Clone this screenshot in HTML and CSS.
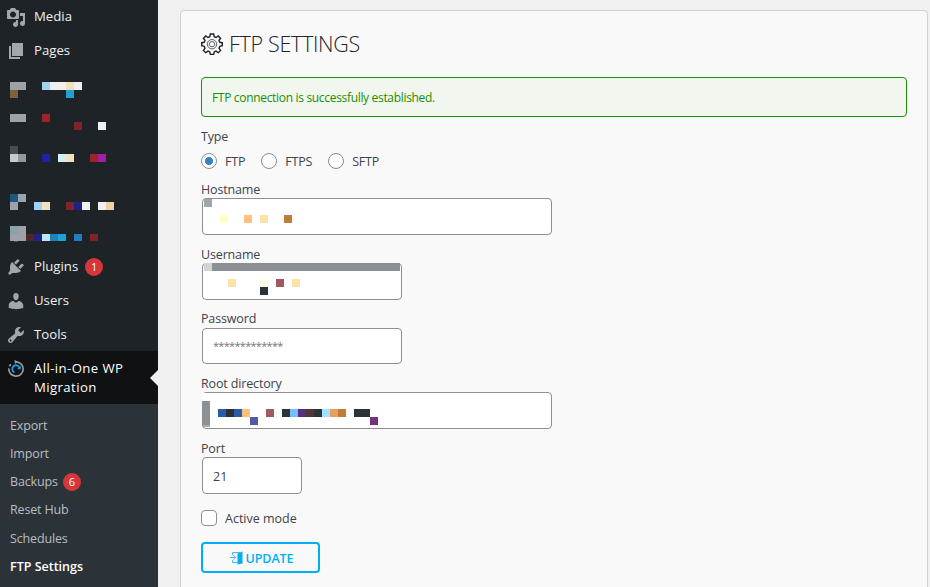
FILE: index.html
```html
<!DOCTYPE html>
<html lang="en">
<head>
  <meta charset="utf-8">
  <title>FTP Settings</title>
  <link rel="stylesheet" href="styles.css">
</head>
<body>
  <div class="admin">
    <nav class="sidebar">
      <ul class="menu">
        <li class="menu-item">
          <svg class="menu-icon" viewBox="0 0 20 20"><path fill-rule="evenodd" d="M13 11V4c0-.55-.45-1-1-1h-1.670L9 1H5L3.670 3H2c-.55 0-1 .45-1 1v7c0 .55.45 1 1 1h10c.55 0 1-.45 1-1zM7 4.500c1.660 0 3 1.340 3 3s-1.340 3-3 3-3-1.340-3-3 1.340-3 3-3zM14 6h5v10.500a2.500 2.500 0 1 1-2-2.450V9h-3zM10 13h2v4.500a2.500 2.500 0 1 1-2-2.450z"/></svg>
          <span class="menu-name">Media</span>
        </li>
        <li class="menu-item">
          <svg class="menu-icon" viewBox="0 0 20 20"><path d="M6 15V2h11v13zM5 16h9v2H3V5h2z"/></svg>
          <span class="menu-name">Pages</span>
        </li>
        <li class="menu-hidden">
          <svg class="mosaic" width="158" height="34" viewBox="0 67 158 34">
            <path fill="#9ca2a7" d="M10 82h16v8H10z"/>
            <path fill="#82613a" d="M10 90h8v8h-8z"/>
            <path fill="#9fd3f5" d="M42 82h8v8h-8z"/>
            <path fill="#f0f0f1" d="M50 82h32v8H50z"/>
            <path fill="#f2e2bc" d="M66 82h8v8h-8z"/>
            <path fill="#1ea2d4" d="M66 90h8v8h-8z"/>
          </svg>
        </li>
        <li class="menu-hidden">
          <svg class="mosaic" width="158" height="34" viewBox="0 101 158 34">
            <path fill="#9ca2a7" d="M10 114h16v8H10z"/>
            <path fill="#9f2428" d="M42 114h8v8h-8z"/>
            <path fill="#7d2329" d="M74 122h8v8h-8z"/>
            <path fill="#f0f0f1" d="M98 122h8v8h-8z"/>
          </svg>
        </li>
        <li class="menu-hidden">
          <svg class="mosaic" width="158" height="34" viewBox="0 135 158 34">
            <path fill="#484d50" d="M10 146h8v8h-8z"/>
            <path fill="#cacaca" d="M10 154h8v8h-8z"/>
            <path fill="#969898" d="M18 154h8v8h-8z"/>
            <path fill="#2022a5" d="M42 154h8v8h-8z"/>
            <path fill="#d0f0f1" d="M58 154h8v8h-8z"/>
            <path fill="#f2e2bc" d="M66 154h8v8h-8z"/>
            <path fill="#9f2428" d="M90 154h8v8h-8z"/>
            <path fill="#a020a5" d="M98 154h8v8h-8z"/>
          </svg>
        </li>
        <li class="menu-hidden after-separator">
          <svg class="mosaic" width="158" height="34" viewBox="0 181 158 34">
            <path fill="#1f577f" d="M10 194h8v8h-8z"/>
            <path fill="#9ca2a7" d="M18 194h8v8h-8zM10 202h8v8h-8z"/>
            <path fill="#9fd3f5" d="M34 202h8v8h-8z"/>
            <path fill="#f2e2bc" d="M42 202h8v8h-8z"/>
            <path fill="#7d2329" d="M66 202h8v8h-8z"/>
            <path fill="#1f2282" d="M74 202h8v8h-8z"/>
            <path fill="#f0f0f1" d="M82 202h8v8h-8zM98 202h8v8h-8z"/>
            <path fill="#f2d1a0" d="M106 202h8v8h-8z"/>
          </svg>
        </li>
        <li class="menu-hidden">
          <svg class="mosaic" width="158" height="34" viewBox="0 215 158 34">
            <path fill="#9ca2a7" d="M10 226h16v15H10z"/>
            <path fill="#8ba2a8" d="M10 226h8v8h-8z"/>
            <path fill="#4f2529" d="M26 234h8v7h-8z"/>
            <path fill="#1f2282" d="M34 234h8v7h-8z"/>
            <path fill="#bfe5f3" d="M42 234h8v7h-8z"/>
            <path fill="#1e7fc1" d="M50 234h8v7h-8zM74 234h8v7h-8z"/>
            <path fill="#1ea2d4" d="M58 234h8v7h-8z"/>
            <path fill="#7d2329" d="M90 234h8v7h-8z"/>
            <path fill="#484d50" d="M14 241h4v1h-4z"/>
          </svg>
        </li>
        <li class="menu-item">
          <svg class="menu-icon" viewBox="0 0 20 20"><path d="M13.110 4.360L9.870 7.600 8 5.730l3.240-3.240c.35-.34 1.050-.2 1.560.32.52.51.66 1.210.31 1.550zm-8 1.770l.91-1.120 9.010 9.010-1.190.84c-.71.71-2.630 1.160-3.820 1.160H6.140L4.900 17.260c-.59.59-1.540.59-2.120 0-.59-.58-.59-1.530 0-2.120l1.240-1.240v-3.880c0-1.130.4-3.190 1.090-3.890zm7.260 3.970l3.240-3.240c.34-.35 1.040-.21 1.550.31.52.51.66 1.210.31 1.550l-3.240 3.250z"/></svg>
          <span class="menu-name">Plugins</span>
          <span class="count">1</span>
        </li>
        <li class="menu-item">
          <svg class="menu-icon" viewBox="0 0 20 20"><path d="M10 9.250c-2.270 0-2.730-3.440-2.730-3.440C7 4.020 7.820 2 9.970 2c2.160 0 2.980 2.020 2.710 3.810 0 0-.41 3.440-2.680 3.440zm0 2.570L12.720 10c2.390 0 4.520 2.330 4.520 4.530v2.490s-3.650 1.130-7.240 1.130c-3.650 0-7.240-1.130-7.240-1.130v-2.490c0-2.250 1.940-4.480 4.470-4.480z"/></svg>
          <span class="menu-name">Users</span>
        </li>
        <li class="menu-item">
          <svg class="menu-icon" viewBox="0 0 20 20"><path d="M16.680 9.770c-1.340 1.340-3.300 1.670-4.950.99l-5.410 6.520c-.99.99-2.590.99-3.580 0s-.99-2.590 0-3.570l6.520-5.420c-.68-1.650-.35-3.610.99-4.950 1.280-1.280 3.120-1.620 4.720-1.060l-2.890 2.890 2.820 2.820 2.860-2.870c.53 1.580.18 3.390-1.080 4.650zM3.810 16.210c.4.390 1.040.39 1.430 0 .4-.4.4-1.040 0-1.430-.39-.4-1.030-.4-1.430 0-.39.39-.39 1.030 0 1.430z"/></svg>
          <span class="menu-name">Tools</span>
        </li>
        <li class="menu-item current">
          <svg class="menu-icon" viewBox="0 0 20 20">
            <path class="ring" d="M10 2.800a7.200 7.200 0 1 1-7.200 6.500M3.500 7.300a7.200 7.200 0 0 1 1.300-2"/>
            <path class="ring-tip" d="M8.500 .8l3 2L9 5z"/>
            <path class="swirl" d="M8.500 13.400a3.700 3.700 0 1 1 5-4.400"/>
            <path class="swirl-tip" d="M11 10.200h3.800V6.500z"/>
          </svg>
          <span class="menu-name wide-name">All-in-One WP<br>Migration</span>
        </li>
      </ul>
      <ul class="submenu">
        <li>Export</li>
        <li>Import</li>
        <li class="has-count">Backups <span class="count">6</span></li>
        <li>Reset Hub</li>
        <li>Schedules</li>
        <li class="active">FTP Settings</li>
      </ul>
    </nav>

    <main class="content">
      <section class="card">
        <h1>
          <svg class="gear" width="22" height="22" viewBox="0 0 22 22">
            <path d="M9.300 1h3.400l.5 2.700 1.800.8 2.300-1.600 2.300 2.300L18 7.400l.8 1.900 2.500.4v3.100l-2.500.5-.8 1.800 1.600 2.300-2.300 2.300-2.300-1.600-1.800.8-.5 2.500H9.300l-.5-2.500-1.800-.8-2.300 1.600-2.300-2.300L4 15.100l-.8-1.800-2.500-.5V9.700l2.500-.4L4 7.400 2.400 5.200l2.300-2.300L7 4.500l1.800-.8z"/>
            <circle class="thin" cx="11" cy="11.200" r="4.700"/>
            <circle class="thin" cx="11" cy="11.200" r="2.700"/>
          </svg>
          <span>FTP SETTINGS</span>
        </h1>
        <div class="message">FTP connection is successfully established.</div>

        <form>
          <div class="label type-label">Type</div>
          <div class="radios">
            <label><input type="radio" name="type" checked><span>FTP</span></label>
            <label><input type="radio" name="type"><span>FTPS</span></label>
            <label><input type="radio" name="type"><span>SFTP</span></label>
          </div>

          <div class="field">
            <div class="label">Hostname</div>
            <div class="input wide">
              <svg class="mosaic" width="350" height="37" viewBox="202 198 350 37">
                <path fill="#a2a5aa" d="M204 199h8v8h-8z"/>
                <path fill="#ffffc8" d="M220 215h8v8h-8z"/>
                <path fill="#ffc07d" d="M244 215h8v8h-8z"/>
                <path fill="#ffe1a6" d="M260 215h8v8h-8z"/>
                <path fill="#c17d37" d="M284 215h8v8h-8z"/>
              </svg>
            </div>
          </div>
          <div class="field">
            <div class="label">Username</div>
            <div class="input">
              <svg class="mosaic" width="200" height="37" viewBox="202 263 200 37">
                <path fill="#d1d3d5" d="M204 263h8v8h-8z"/>
                <path fill="#8c8f94" d="M212 263h188v8H212z"/>
                <path fill="#ffe1a6" d="M228 279h8v8h-8zM292 279h8v8h-8z"/>
                <path fill="#ffffe6" d="M260 279h8v8h-8z"/>
                <path fill="#2b3338" d="M260 287h8v8h-8z"/>
                <path fill="#a05a62" d="M276 279h8v8h-8z"/>
              </svg>
            </div>
          </div>
          <div class="field">
            <div class="label">Password</div>
            <div class="input password">*************</div>
          </div>
          <div class="field">
            <div class="label">Root directory</div>
            <div class="input wide">
              <svg class="mosaic" width="350" height="37" viewBox="202 392 350 37">
                <path fill="#fff" d="M202 393h8v8h-8z"/>
                <path fill="#8c8f94" d="M202 401h8v24h-8z"/>
                <path fill="#a9abaf" d="M202 425h8v2h-8z"/>
                <path fill="#2b5ca5" d="M218 409h8v8h-8zM234 409h8v8h-8z"/>
                <path fill="#2b3338" d="M226 409h8v8h-8zM282 409h8v8h-8zM314 409h8v8h-8zM354 409h16v8h-16z"/>
                <path fill="#ffc07d" d="M242 409h8v8h-8z"/>
                <path fill="#5558a5" d="M250 417h8v8h-8z"/>
                <path fill="#a05a62" d="M266 409h8v8h-8z"/>
                <path fill="#75bfff" d="M290 409h8v8h-8z"/>
                <path fill="#54307d" d="M298 409h8v8h-8z"/>
                <path fill="#54343a" d="M306 409h8v8h-8z"/>
                <path fill="#a0e3ff" d="M322 409h8v8h-8z"/>
                <path fill="#e6a05f" d="M330 409h8v8h-8z"/>
                <path fill="#c17d37" d="M338 409h8v8h-8z"/>
                <path fill="#75307d" d="M370 417h8v8h-8z"/>
              </svg>
            </div>
          </div>
          <div class="field">
            <div class="label">Port</div>
            <div class="input short">21</div>
          </div>

          <label class="check"><input type="checkbox"><span>Active mode</span></label>

          <button type="button" class="update">
            <svg width="13" height="14" viewBox="0 0 13 14">
              <path class="door" d="M7.500 2.500L12.500.5v12L7.500 13.500z"/>
              <path class="frame" d="M2.500 4V1.500h8M2.500 9v2.500h5M0 6.500h5.500M3.500 4.300l2.200 2.200-2.200 2.200"/>
            </svg>
            <span>UPDATE</span>
          </button>
        </form>
      </section>
    </main>
  </div>
</body>
</html>
```

FILE: styles.css
```css
* { box-sizing: border-box; }

body {
  margin: 0;
  background: #f0f0f1;
  color: #3c434a;
  font-family: "Open Sans", "Noto Sans", sans-serif;
  font-size: 12.5px;
}

ul { list-style: none; margin: 0; padding: 0; }

.admin {
  display: flex;
  height: 587px;
  overflow: hidden;
}

/* sidebar */
.sidebar {
  flex: 0 0 158px;
  display: flex;
  flex-direction: column;
  background: #1d2327;
}

.menu { margin-top: -1px; }

.menu-item {
  display: flex;
  align-items: flex-start;
  height: 34px;
  padding: 8px 0 0 6px;
  color: #f0f0f1;
  font-size: 13.2px;
  line-height: 19px;
}

.wide-name { letter-spacing: .4px; }

.menu-icon {
  width: 20px;
  height: 20px;
  margin-right: 8px;
  fill: #a2a7ac;
}

.menu-hidden { height: 34px; }
.after-separator { margin-top: 12px; }
.mosaic { display: block; shape-rendering: crispEdges; }

.count {
  width: 18px;
  height: 18px;
  margin: 1px 0 0 7px;
  border-radius: 9px;
  background: #d63638;
  color: #fff;
  font-size: 11px;
  line-height: 18px;
  text-align: center;
}

.current {
  position: relative;
  height: 53px;
  background: #101112;
  color: #fff;
}

.current::after {
  content: "";
  position: absolute;
  right: 0;
  top: 19px;
  border: 8px solid transparent;
  border-right-color: #f0f0f1;
  border-left: 0;
}

.ring, .swirl { fill: none; stroke: #9a9da0; stroke-width: 1.7; }
.ring-tip { fill: #9a9da0; }
.swirl { stroke: #1b9ade; stroke-width: 1.8; }
.swirl-tip { fill: #1b9ade; }

.submenu {
  flex: 1;
  padding-top: 7.85px;
  background: #2c3338;
  color: #b9bdc1;
}

.submenu li {
  display: flex;
  height: 28.2px;
  padding: 5px 10px;
  letter-spacing: -.15px;
  line-height: 18px;
}

.submenu .count { margin: 0 0 0 5px; letter-spacing: 0; }
.submenu .active { color: #fff; font-weight: 600; letter-spacing: 0; }

/* settings card */
.content { flex: 1; padding: 10px 2px 0 22px; }

.card {
  height: 600px;
  padding: 20px;
  border: 1px solid #d0d0d0;
  border-radius: 4px;
  background: #f9f9f9;
}

h1 {
  display: flex;
  align-items: center;
  gap: 6px;
  height: 26px;
  margin: 0 0 20px;
  color: #1d2327;
  font-size: 21.5px;
  font-weight: 300;
  letter-spacing: -.3px;
  line-height: 26px;
}

.gear { fill: none; stroke: #1d2327; stroke-width: 1.4; }
.gear .thin { stroke-width: .7; }

.message {
  height: 40px;
  padding-left: 10px;
  border: 1px solid #189000;
  border-radius: 4px;
  background: #f1f6ef;
  color: #189000;
  font-size: 12px;
  letter-spacing: -.32px;
  line-height: 40px;
}

.label {
  height: 18px;
  padding-top: 1px;
  letter-spacing: -.15px;
  line-height: 18px;
}

.type-label { margin-top: 10px; }

.radios {
  display: flex;
  gap: 16px;
  height: 16px;
  margin: 8px 0 11px;
  letter-spacing: -.2px;
}

.radios label, .check {
  display: flex;
  align-items: center;
  gap: 8px;
}

input[type="radio"], input[type="checkbox"] {
  appearance: none;
  width: 16px;
  height: 16px;
  margin: 0;
  border: 1px solid #8c8f94;
  border-radius: 50%;
  background: #fff;
}

input[type="radio"]:checked {
  background: radial-gradient(circle, #3582c4 3.7px, #fff 4.300px);
}

input[type="checkbox"] { border-radius: 4px; }

.field { height: 64.7px; }

.input {
  width: 200px;
  height: 37px;
  margin-left: 1px;
  padding-left: 10px;
  border: 1px solid #8c8f94;
  border-radius: 4px;
  background: #fff;
  line-height: 37px;
}

.input .mosaic { margin: -1px 0 0 -11px; }
.wide { width: 350px; }
.short { width: 100px; }

.password {
  height: 36px;
  margin-top: 1px;
  color: #757575;
  font-size: 11px;
  letter-spacing: -.7px;
  line-height: 33px;
}

.check { height: 16px; margin-top: 7px; }
.check span { padding-top: 1px; }

.update {
  display: flex;
  align-items: center;
  justify-content: center;
  gap: 3px;
  width: 119px;
  height: 31px;
  margin-top: 16px;
  padding: 0 0 0 2px;
  border: 2px solid #00aff0;
  border-radius: 4px;
  background: transparent;
  color: #00aff0;
  font: 600 12.5px/27px "Open Sans", sans-serif;
}

.update span { padding-top: 2px; letter-spacing: -.1px; }

.door { fill: #00aff0; }
.frame { fill: none; stroke: #4bb5ee; }
```
